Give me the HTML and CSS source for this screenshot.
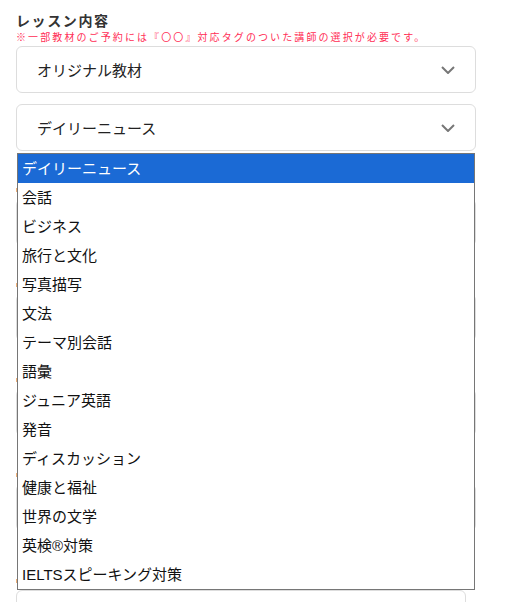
FILE: index.html
```html
<!DOCTYPE html>
<html lang="ja">
<head>
    <meta charset="UTF-8">
    <meta name="viewport" content="width=device-width, initial-scale=1.0">
    <title>レッスン内容</title>
    <link rel="stylesheet" href="styles.css">
</head>
<body>
    <div class="form">
        <h2 class="title">レッスン内容</h2>
        <p class="note">※一部教材のご予約には『〇〇』対応タグのついた講師の選択が必要です。</p>

        <div class="select">
            <span>オリジナル教材</span>
            <svg class="chevron" viewBox="0 0 14 8"><path d="M1 1l6 6 6-6"/></svg>
        </div>

        <div class="select-wrap">
            <div class="select">
                <span>デイリーニュース</span>
                <svg class="chevron" viewBox="0 0 14 8"><path d="M1 1l6 6 6-6"/></svg>
            </div>

            <ul class="dropdown">
                <li class="selected">デイリーニュース</li>
                <li>会話</li>
                <li>ビジネス</li>
                <li>旅行と文化</li>
                <li>写真描写</li>
                <li>文法</li>
                <li>テーマ別会話</li>
                <li>語彙</li>
                <li>ジュニア英語</li>
                <li>発音</li>
                <li>ディスカッション</li>
                <li>健康と福祉</li>
                <li>世界の文学</li>
                <li>英検®対策</li>
                <li>IELTSスピーキング対策</li>
            </ul>
        </div>

        <!-- fields hidden under the open list -->
        <div class="field">
            <span class="mark"></span>
            <div class="select"></div>
        </div>
        <div class="field">
            <span class="mark"></span>
            <div class="select"></div>
        </div>
        <div class="field">
            <span class="mark"></span>
            <div class="select"></div>
        </div>
        <div class="field">
            <span class="mark"></span>
            <div class="select"></div>
        </div>
        <div class="field field-last">
            <span class="mark"></span>
            <div class="textarea"></div>
        </div>
    </div>
</body>
</html>
```

FILE: styles.css
```css
* {
    margin: 0;
    padding: 0;
    box-sizing: border-box;
}

body {
    background: #fff;
    font-family: "Noto Sans CJK JP", "Noto Sans", sans-serif;
    color: #222;
    padding-bottom: 40px;
}

.form {
    width: 460px;
    margin-left: 16px;
    padding-top: 10px;
}

.title {
    font-size: 14px;
    line-height: 20px;
    font-weight: bold;
    letter-spacing: 1.6px;
    color: #333;
}

.note {
    font-size: 10px;
    line-height: 14px;
    letter-spacing: 2.1px;
    color: #ff2d55;
    white-space: nowrap;
    margin-bottom: 2px;
}

.select {
    height: 47px;
    border: 1px solid #ddd;
    border-radius: 6px;
    display: flex;
    align-items: center;
    justify-content: space-between;
    padding: 0 20px;
    font-size: 15px;
    margin-bottom: 11px;
}

.chevron {
    width: 14px;
    height: 8px;
    fill: none;
    stroke: #777;
    stroke-width: 2;
}

.select-wrap {
    position: relative;
}

.dropdown {
    position: absolute;
    top: 49px;
    left: 1px;
    width: 458px;
    list-style: none;
    background: #fff;
    border: 1px solid #767676;
    z-index: 10;
}

.dropdown li {
    height: 29px;
    line-height: 29px;
    padding-left: 4px;
    font-family: "Liberation Sans", "Noto Sans CJK JP", sans-serif;
    font-size: 15px;
    color: #111;
}

.dropdown li.selected {
    background: #1b6ad5;
    color: #fff;
}

.field {
    margin-top: 30px;
}

.mark {
    display: block;
    width: 1px;
    height: 18px;
    padding: 7px 0;
    background: #f0b27a;
    background-clip: content-box;
}

.field .select {
    margin-bottom: 0;
}

.field-last {
    margin-top: 41px;
}

.textarea {
    width: 450px;
    height: 120px;
    border: 1px solid #ddd;
    border-radius: 6px;
}
```
